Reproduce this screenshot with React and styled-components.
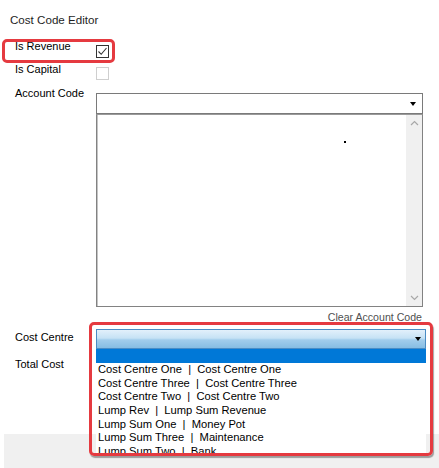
import React from "react";
import styled, { createGlobalStyle } from "styled-components";

const GlobalStyle = createGlobalStyle`
  html, body {
    margin: 0;
    padding: 0;
    background: #fff;
  }
  body {
    font-family: "Liberation Sans", Arial, sans-serif;
    font-size: 11px;
    color: #000;
  }
`;

const Panel = styled.div`
  position: relative;
  width: 439px;
  height: 468px;
  display: flex;
  flex-direction: column;
  overflow: hidden;
  background: #fff;
`;

const Title = styled.div`
  margin: 13px 0 0 10px;
  font-size: 11.6px;
  line-height: 14px;
  color: #1e1e1e;
`;

const Form = styled.div`
  display: flex;
  flex-direction: column;
  padding: 13px 16px 0 15px;
`;

const Row = styled.div`
  position: relative;
  display: grid;
  grid-template-columns: 81px 1fr;
  align-items: start;
  height: ${(p) => p.$h}px;

  /* red annotation frame round the revenue flag */
  ${(p) =>
    p.$marked &&
    `
    &::before {
      content: "";
      position: absolute;
      left: -13px;
      top: -1px;
      width: 107px;
      height: 18px;
      border: 3px solid #e53a40;
      border-radius: 5px;
      pointer-events: none;
    }
  `}
`;

const Label = styled.div`
  line-height: 13px;
  margin-top: ${(p) => p.$top || 0}px;
  white-space: nowrap;
`;

const Check = styled.div`
  width: 11px;
  height: 11px;
  margin-top: ${(p) => p.$top || 0}px;
  border: 1px solid ${(p) => (p.$disabled ? "#cfcfcf" : "#333")};
  background: #fff;
  display: flex;
  align-items: center;
  justify-content: center;
`;

const Field = styled.div`
  display: flex;
  flex-direction: column;
  margin-top: ${(p) => p.$top || 0}px;
`;

const Combo = styled.div`
  position: relative;
  height: 19px;
  border: 1px solid #7a7a7a;
  background: #fff;
`;

const Arrow = styled.span`
  position: absolute;
  right: ${(p) => p.$right || 7}px;
  top: 50%;
  margin-top: -2px;
  width: 0;
  height: 0;
  border-left: 3.5px solid transparent;
  border-right: 3.5px solid transparent;
  border-top: 4px solid #000;
`;

const ListBox = styled.div`
  position: relative;
  height: 191px;
  border: 1px solid #828282;
  border-top-color: #9a9a9a;
  box-shadow: inset 1px 0 0 #c4c4c4;
  background: #fff;
  display: flex;
  justify-content: flex-end;
`;

const Speck = styled.span`
  position: absolute;
  left: 247px;
  top: 26px;
  width: 2px;
  height: 2px;
  background: #000;
`;

const ScrollBar = styled.div`
  width: 16px;
  background: #f0f0f0;
  display: flex;
  flex-direction: column;
  justify-content: space-between;
  align-items: center;
  padding: 5px 0;
`;

const ClearLink = styled.div`
  text-align: right;
  padding-right: 1px;
  line-height: 13px;
  margin-top: 4px;
  font-size: 10.6px;
  color: #505050;
`;

const CostCell = styled.div`
  position: relative;
  height: 20px;
  margin: 2px -3px 0 0;
`;

const CostFrame = styled.div`
  position: absolute;
  left: -7px;
  top: -7px;
  right: -7px;
  height: 128px;
  border: 3px solid #e53a40;
  border-radius: 5px;
  box-shadow: 1px 2px 1px rgba(0, 0, 0, 0.35);
  pointer-events: none;
  z-index: 2;
`;

const CostCombo = styled.div`
  position: relative;
  height: 18px;
  border: 1px solid #4a8cc4;
  background: linear-gradient(#e2f0fb 0%, #c6e2f5 45%, #a2cdec 55%, #86bde3 100%);
`;

const DropList = styled.div`
  position: absolute;
  left: 0;
  right: 0;
  top: 20px;
  height: 106px;
  overflow: hidden;
  background: #fff;
  z-index: 1;
`;

const Item = styled.div`
  height: ${(p) => (p.$selected ? 14 : 13.65)}px;
  line-height: 13.65px;
  padding-left: 2px;
  font-size: 11.2px;
  white-space: pre;
  background: ${(p) => (p.$selected ? "#0078d7" : "transparent")};
  color: ${(p) => (p.$selected ? "#fff" : "#000")};
`;

const Footer = styled.div`
  margin: auto 0 0 4px;
  height: 34px;
  background: #f0f0f0;
`;

const Chevron = ({ up }) => (
  <svg width="9" height="6" viewBox="0 0 9 6">
    <polyline
      points={up ? "1,5 4.5,1.5 8,5" : "1,1 4.5,4.5 8,1"}
      fill="none"
      stroke="#a8a8a8"
      strokeWidth="1.2"
    />
  </svg>
);

const Tick = () => (
  <svg width="11" height="11" viewBox="0 0 11 11">
    <polyline points="1.5,5.5 4.2,8.3 9.5,2" fill="none" stroke="#333" strokeWidth="1.1" />
  </svg>
);

const costCentres = [
  ["Cost Centre One", "Cost Centre One"],
  ["Cost Centre Three", "Cost Centre Three"],
  ["Cost Centre Two", "Cost Centre Two"],
  ["Lump Rev", "Lump Sum Revenue"],
  ["Lump Sum One", "Money Pot"],
  ["Lump Sum Three", "Maintenance"],
  ["Lump Sum Two", "Bank"],
];

const App = () => {
  return (
    <>
      <GlobalStyle />
      <Panel>
        <Title>Cost Code Editor</Title>
        <Form>
          <Row $h={23} $marked>
            <Label>Is Revenue</Label>
            <Check $top={5}>
              <Tick />
            </Check>
          </Row>
          <Row $h={24}>
            <Label>Is Capital</Label>
            <Check $top={4} $disabled />
          </Row>
          <Row $h={240}>
            <Label>Account Code</Label>
            <Field $top={6}>
              <Combo>
                <Arrow $right={6} />
              </Combo>
              <ListBox>
                <Speck />
                <ScrollBar>
                  <Chevron up />
                  <Chevron />
                </ScrollBar>
              </ListBox>
              <ClearLink>Clear Account Code</ClearLink>
            </Field>
          </Row>
          <Row $h={31}>
            <Label $top={4}>Cost Centre</Label>
            <CostCell>
              <CostCombo>
                <Arrow $right={4} />
              </CostCombo>
              <DropList>
                <Item $selected> </Item>
                {costCentres.map(([code, name]) => (
                  <Item key={code}>{`${code}  |  ${name}`}</Item>
                ))}
              </DropList>
              <CostFrame />
            </CostCell>
          </Row>
          <Row $h={20}>
            <Label>Total Cost</Label>
          </Row>
        </Form>
        <Footer />
      </Panel>
    </>
  );
};

export default App;
